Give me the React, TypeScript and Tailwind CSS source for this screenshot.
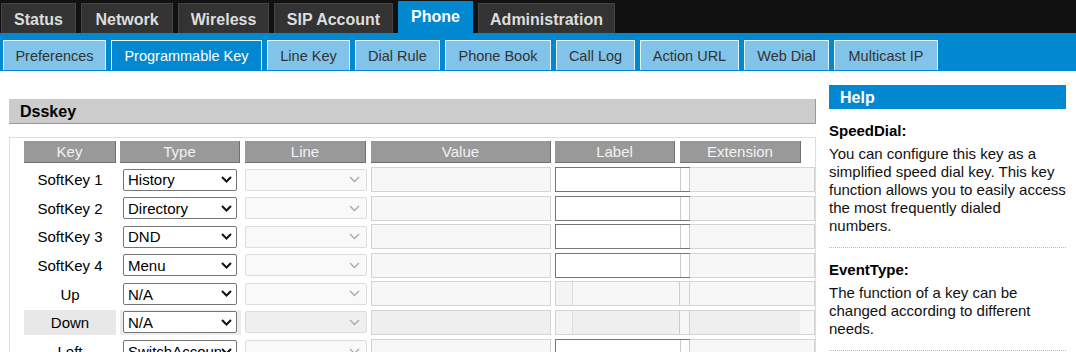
import { ReactNode } from "react";

const topTabs = [
  { label: "Status", w: "w-[75px]", active: false },
  { label: "Network", w: "w-[92px]", active: false },
  { label: "Wireless", w: "w-[91px]", active: false },
  { label: "SIP Account", w: "w-[119px]", active: false },
  { label: "Phone", w: "w-[75px]", active: true },
  { label: "Administration", w: "w-[137px]", active: false },
];

const subTabs = [
  { label: "Preferences", w: "w-[103px]", active: false },
  { label: "Programmable Key", w: "w-[151px]", active: true },
  { label: "Line Key", w: "w-[83px]", active: false },
  { label: "Dial Rule", w: "w-[85px]", active: false },
  { label: "Phone Book", w: "w-[106px]", active: false },
  { label: "Call Log", w: "w-[79px]", active: false },
  { label: "Action URL", w: "w-[99px]", active: false },
  { label: "Web Dial", w: "w-[85px]", active: false },
  { label: "Multicast IP", w: "w-[104px]", active: false },
];

const headers = [
  { label: "Key", cls: "w-[92px]" },
  { label: "Type", cls: "w-[120px] ml-[4px]" },
  { label: "Line", cls: "w-[121px] ml-[5px]" },
  { label: "Value", cls: "w-[180px] ml-[5px]" },
  { label: "Label", cls: "w-[120px] ml-[4px]" },
  { label: "Extension", cls: "w-[121px] ml-[5px]" },
];

const rows = [
  { key: "SoftKey 1", type: "History", label: true, hover: false },
  { key: "SoftKey 2", type: "Directory", label: true, hover: false },
  { key: "SoftKey 3", type: "DND", label: true, hover: false },
  { key: "SoftKey 4", type: "Menu", label: true, hover: false },
  { key: "Up", type: "N/A", label: false, hover: false },
  { key: "Down", type: "N/A", label: false, hover: true },
  { key: "Left", type: "SwitchAccount", label: true, hover: false },
];

const Chevron = ({ color, width }: { color: string; width: number }) => (
  <svg width="11" height="7" viewBox="0 0 11 7" className="shrink-0">
    <polyline points="1,1 5.5,5.5 10,1" fill="none" stroke={color} strokeWidth={width} />
  </svg>
);

const HelpSection = ({ title, children }: { title: string; children: ReactNode }) => (
  <div className="border-b border-dotted border-[#bbb] pt-[13px] pb-[12px]">
    <div className="font-bold text-[15px] leading-[18px] text-black">{title}</div>
    <div className="mt-[5px] text-[15px] leading-[18px] text-[#111] whitespace-nowrap">{children}</div>
  </div>
);

export default function App() {
  return (
    <div className="h-[352px] w-[1076px] overflow-hidden bg-white font-['Liberation_Sans',Arial,sans-serif]">
      {/* top nav */}
      <div className="h-[33px] bg-[#111] flex items-end gap-[5px] pl-[1px]">
        {topTabs.map((t) => (
          <div
            key={t.label}
            className={
              t.active
                ? `${t.w} h-[32px] bg-[#0288d1] text-white flex items-center justify-center font-bold text-[16px]`
                : `${t.w} h-[30px] pt-[2px] bg-[#333] border border-b-0 border-[#444] text-[#ddd] flex items-center justify-center font-bold text-[16px]`
            }
          >
            {t.label}
          </div>
        ))}
      </div>
      <div className="h-[38px] bg-[#0288d1] flex gap-[5px] pl-[3px] pt-[7px]">
        {subTabs.map((t) => (
          <div
            key={t.label}
            className={
              t.active
                ? `${t.w} h-[30px] pt-[3px] bg-[#0288d1] border border-b-0 border-white text-white flex items-center justify-center text-[14.5px]`
                : `${t.w} h-[30px] pt-[3px] bg-[#82c4e9] border border-b-0 border-[#e6f3fb] text-[#333] flex items-center justify-center text-[14.5px]`
            }
          >
            {t.label}
          </div>
        ))}
      </div>

      <div className="flex gap-[13px] pl-[9px] pt-[14px]">
        {/* main */}
        <div className="w-[807px] pt-[14px]">
          <div className="h-[25px] pt-[2px] bg-[#ccc] border-b border-r border-[#999] pl-[11px] flex items-center font-bold text-[16px] text-black">
            Dsskey
          </div>
          <div className="mt-[13px] border border-[#ddd] pl-[14px] pt-[3px] h-[300px]">
            <div className="flex">
              {headers.map((h) => (
                <div
                  key={h.label}
                  className={`${h.cls} h-[22px] pt-[2px] bg-[#999] border-r border-b border-[#707070] text-[#f2f2f2] text-[15px] flex items-center justify-center`}
                >
                  {h.label}
                </div>
              ))}
            </div>
            <div className="mt-[4px] flex flex-col gap-[3.6px]">
              {rows.map((r) => (
                <div key={r.key} className="flex h-[25px]">
                  <div
                    className={`w-[92px] pt-[2px] flex items-center justify-center text-[15px] text-black ${r.hover ? "bg-[#e8e8e8]" : ""}`}
                  >
                    {r.key}
                  </div>
                  <div className={`w-[121px] ml-[4px] flex items-center pl-[3px] ${r.hover ? "bg-[#ececec]" : ""}`}>
                    <div className="w-[114px] h-[22px] bg-white border border-[#767676] rounded-[2px] flex items-center pl-[4px] pr-[4px] text-[15px] text-black">
                      <span className="flex-1 pt-[2px] overflow-hidden whitespace-nowrap">{r.type}</span>
                      <Chevron color="#111" width={2} />
                    </div>
                  </div>
                  <div className="w-[122px] ml-[4px] flex items-center">
                    <div
                      className={`w-[122px] h-[22px] border border-[#ddd] rounded-[2px] flex items-center justify-end pr-[6px] ${r.hover ? "bg-[#efefef]" : "bg-[#f9f9f9]"}`}
                    >
                      <Chevron color="#aaa" width={1.4} />
                    </div>
                  </div>
                  <div
                    className={`w-[180px] ml-[4px] h-[25px] border border-[#d4d4d4] ${r.hover ? "bg-[#efefef]" : "bg-[#f7f7f7]"}`}
                  />
                  {r.label ? (
                    <div className="w-[135px] ml-[4px] h-[25px] bg-white border border-r-0 border-[#767676] flex justify-end">
                      <div className="w-[10px] h-full border-l border-r border-[#ccc]" />
                    </div>
                  ) : (
                    <div
                      className={`w-[135px] ml-[4px] h-[25px] border border-[#d4d4d4] flex justify-between ${r.hover ? "bg-[#efefef]" : "bg-[#f7f7f7]"}`}
                    >
                      <div className="w-[17px] h-full border-r border-[#ddd] bg-[#f4f4f4]" />
                      <div className="w-[10px] h-full border-l border-[#ccc] bg-[#f7f7f7]" />
                    </div>
                  )}
                  <div
                    className={`w-[125px] h-[25px] border border-l-0 border-[#d4d4d4] ${r.hover ? "bg-[linear-gradient(to_right,#efefef_0,#efefef_110px,#f7f7f7_110px)]" : "bg-[#f7f7f7]"}`}
                  />
                </div>
              ))}
            </div>
          </div>
        </div>

        {/* help */}
        <div className="w-[237px]">
          <div className="h-[24px] pt-[2px] bg-[#0288d1] text-white font-bold text-[16px] flex items-center pl-[11px]">Help</div>
          <HelpSection title="SpeedDial:">
            You can configure this key as a
            <br />
            simplified speed dial key. This key
            <br />
            function allows you to easily access
            <br />
            the most frequently dialed
            <br />
            numbers.
          </HelpSection>
          <HelpSection title="EventType:">
            The function of a key can be
            <br />
            changed according to different
            <br />
            needs.
          </HelpSection>
        </div>
      </div>
    </div>
  );
}
